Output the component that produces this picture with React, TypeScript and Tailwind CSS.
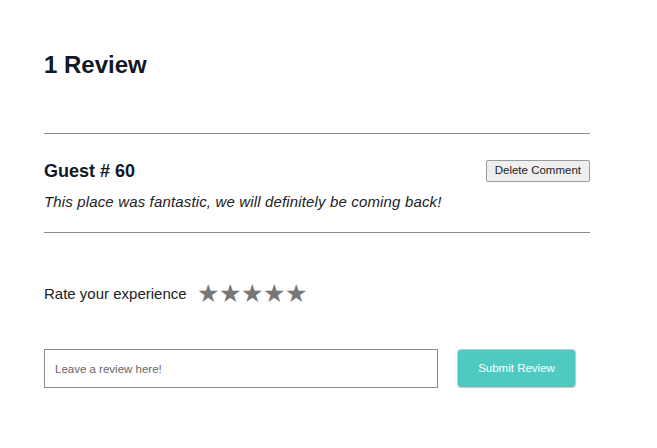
import React from "react";

export default function App() {
  const font = { fontFamily: '"Liberation Sans", Arial, sans-serif' };
  return (
    <div className="w-[657px] h-[448px] bg-white overflow-hidden" style={font}>
      <div className="pl-[44px] w-[590px] pt-[49px]">
        <h1 className="text-[24px] leading-[32px] font-bold text-[#111827]">1 Review</h1>
        <div className="mt-[52px] border-t border-[#8a8a8a]" />
        <div className="flex items-center justify-between mt-[26px] h-[22px]">
          <div className="text-[18px] font-bold text-[#111827]">Guest # 60</div>
          <button className="h-[22px] px-[8px] text-[11.5px] text-[#222] bg-[#efefef] border border-[#9a9a9a] rounded-[2px]">
            Delete Comment
          </button>
        </div>
        <p className="mt-[10px] text-[15px] leading-[20px] italic text-[#222] tracking-[0.15px]">
          This place was fantastic, we will definitely be coming back!
        </p>
        <div className="mt-[20px] border-t border-[#8a8a8a]" />
        <div className="flex items-center mt-[48px] h-[26px]">
          <span className="text-[15px] text-[#222]">Rate your experience</span>
          <div className="flex ml-[10px] -mt-[1px] text-[#777] text-[25px] leading-none">
            <span>★</span><span>★</span><span>★</span><span>★</span><span>★</span>
          </div>
        </div>
        <div className="flex items-center mt-[42px]">
          <input
            className="w-[394px] h-[39px] border border-[#8a8a8a] px-[10px] text-[11.5px] text-[#333] placeholder:text-[#666] outline-none"
            placeholder="Leave a review here!"
          />
          <button className="ml-[19px] w-[119px] h-[39px] rounded-[4px] bg-[#4ecac0] border border-[#c9c9c9] text-white text-[11.5px]">
            Submit Review
          </button>
        </div>
      </div>
    </div>
  );
}
